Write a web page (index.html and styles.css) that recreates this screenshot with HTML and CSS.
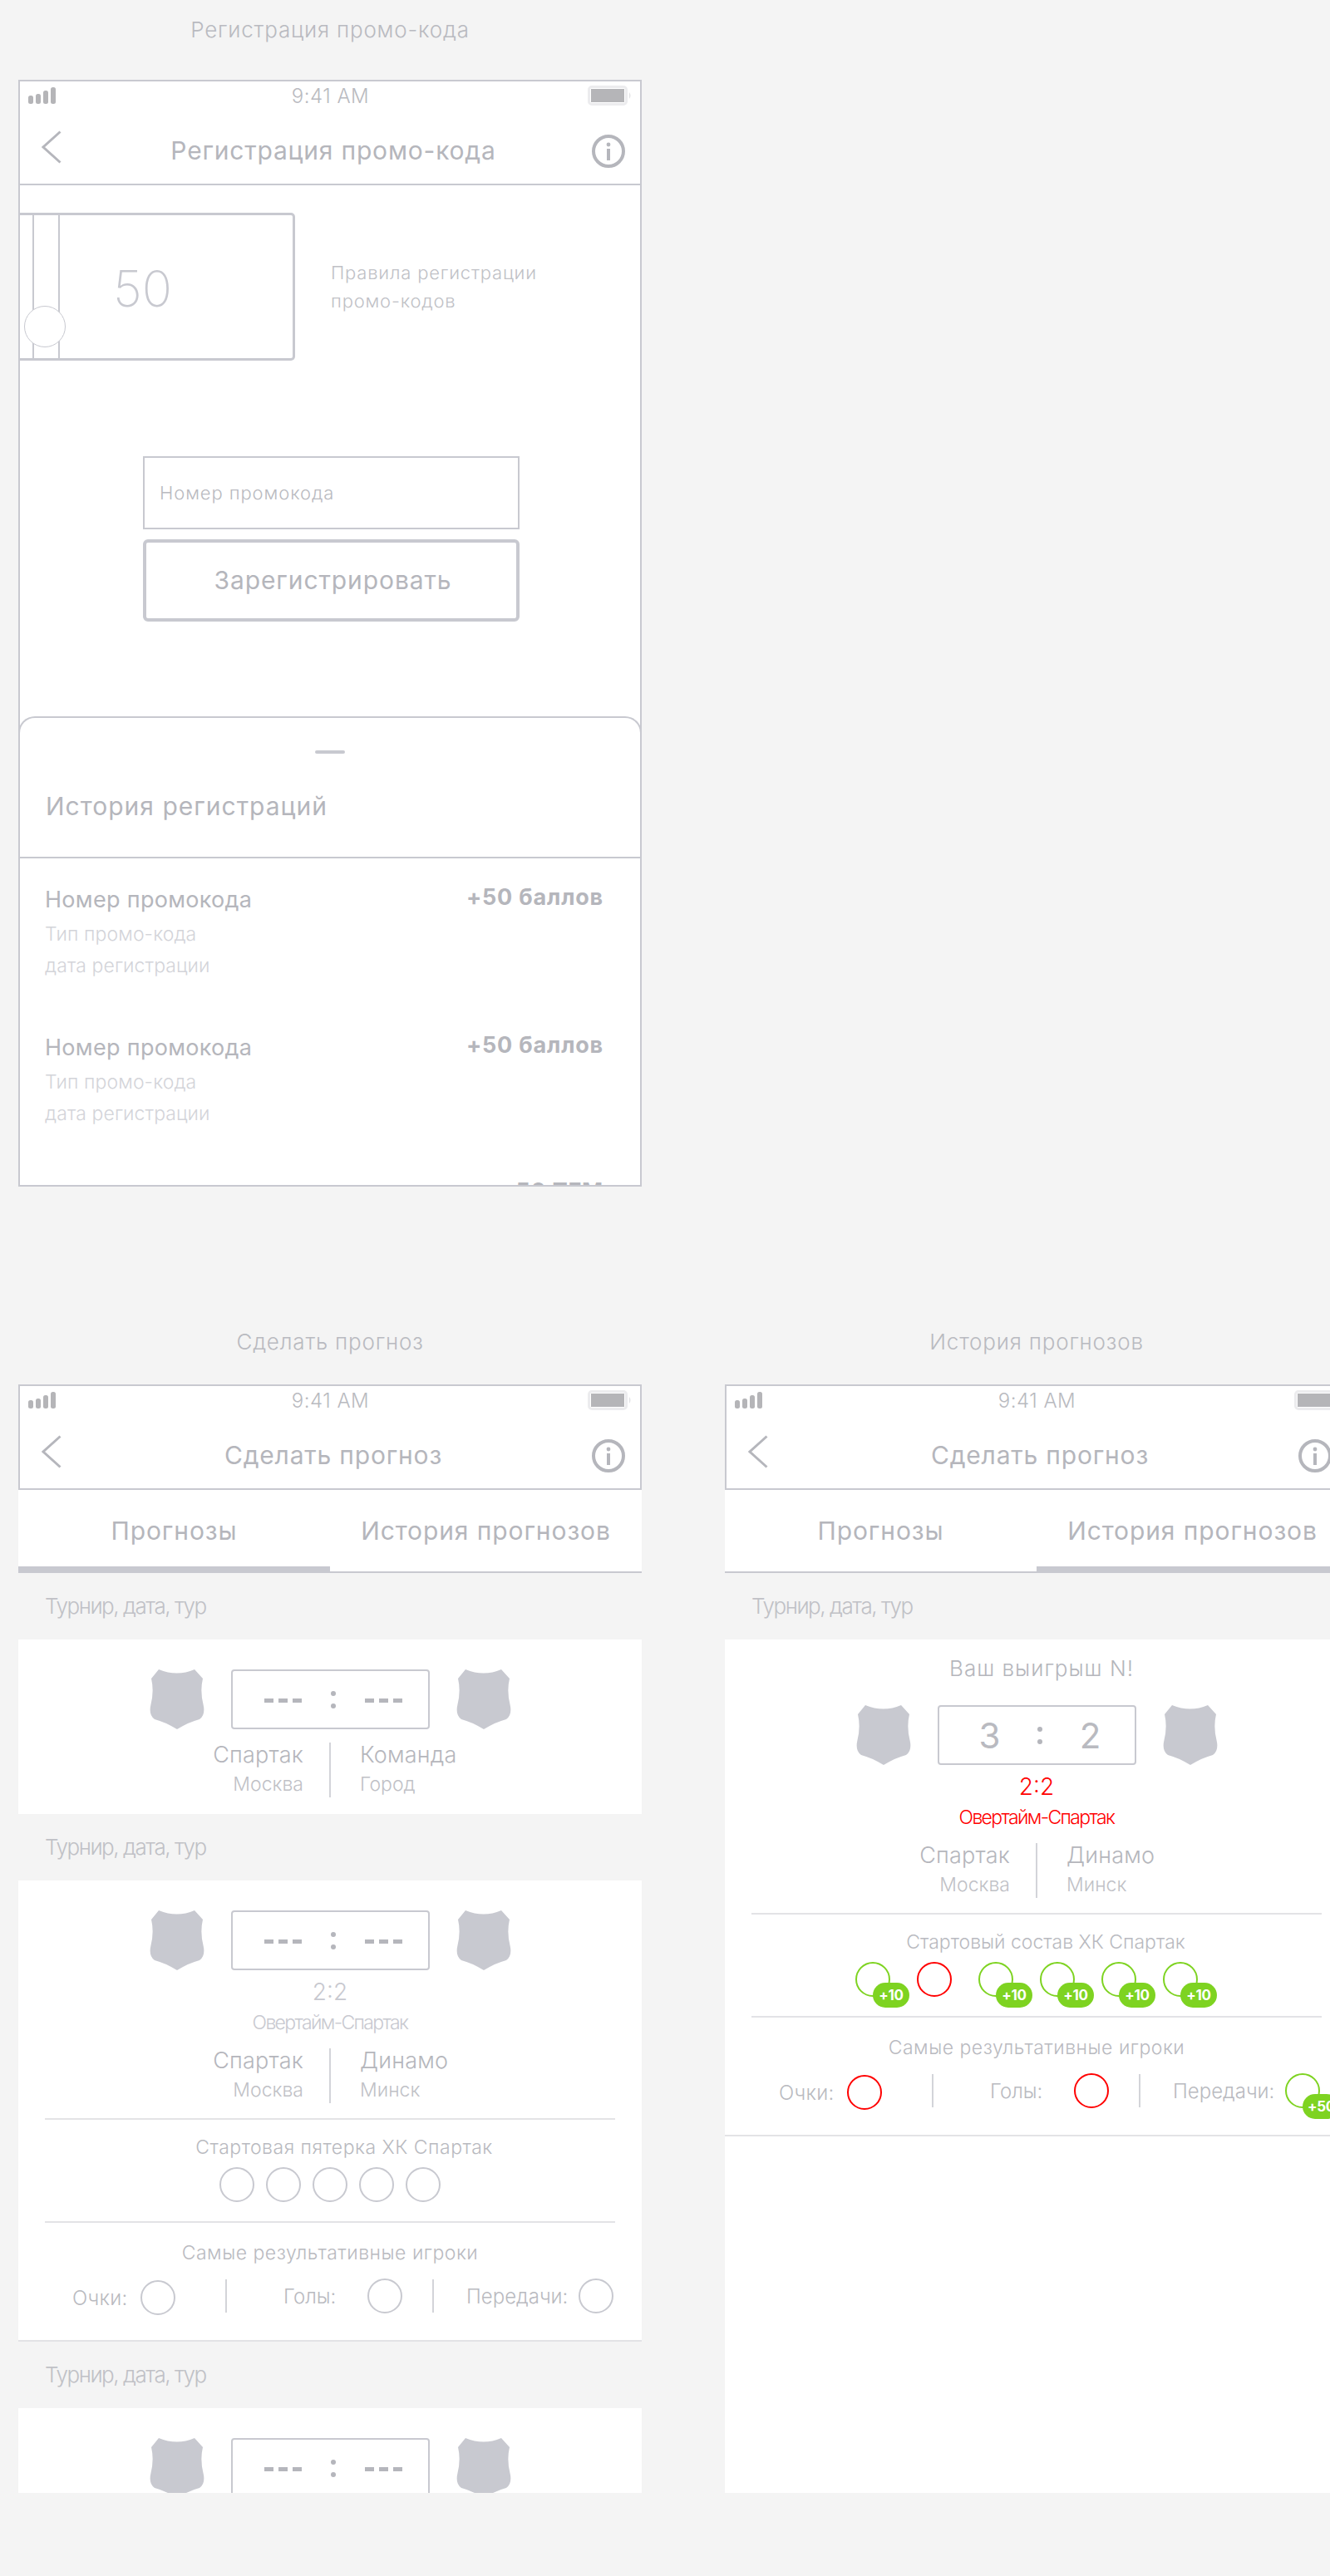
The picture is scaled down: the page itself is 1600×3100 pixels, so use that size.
FILE: index.html
```html
<!DOCTYPE html>
<html lang="ru">
<head>
  <meta charset="UTF-8" />
  <title>Прогнозы и промо-коды</title>
  <link rel="stylesheet" href="styles.css">
</head>
<body>

<!-- Icons used on all screens -->
<svg class="sprite" width="0" height="0">
  <symbol id="i-signal" viewBox="0 0 33 20">
    <rect x="0" y="10" width="6" height="10" rx="2.5" />
    <rect x="9" y="8" width="6" height="12" rx="2.5" />
    <rect x="18" y="4" width="6" height="16" rx="2.5" />
    <rect x="27" y="0" width="6" height="20" rx="2.5" />
  </symbol>
  <symbol id="i-battery" viewBox="0 0 54 24">
    <rect x="1.5" y="1.5" width="45" height="21" rx="3.5" fill="#fff" stroke="#ececee" stroke-width="3" />
    <rect x="4" y="4" width="40" height="16" fill="#b5b5b8" />
    <path d="M50 8 Q53 12 50 16 Z" fill="#e2e2e4" />
  </symbol>
  <symbol id="i-back" viewBox="0 0 24 40">
    <path d="M22.5 1.5 L2 20 L22.5 38.5" fill="none" stroke="#b5b6bc" stroke-width="3" />
  </symbol>
  <symbol id="i-info" viewBox="0 0 40 40">
    <circle cx="20" cy="20" r="18" fill="none" stroke="#b5b6bc" stroke-width="4" />
    <circle cx="20" cy="12" r="2.4" fill="#b5b6bc" />
    <rect x="18" y="17" width="4" height="14" fill="#b5b6bc" />
  </symbol>
  <symbol id="i-shield" viewBox="0 0 66 72">
    <path d="M11 0 Q33 9 54 0 L64 11 Q60.5 26 64.5 42 Q67.5 55 60 60 Q48 63 33 72 Q18 63 6 60 Q-1.5 55 1.5 42 Q5.5 26 2 11 Z" fill="#c8c9d0" />
  </symbol>
</svg>

<div class="board">

  <!-- Регистрация промо-кода -->
  <section class="artboard artboard-wide">
    <div class="board-label board-label-first">Регистрация промо-кода</div>
    <header class="phone-head">
      <div class="status">
        <svg class="ic-signal"><use href="#i-signal" /></svg>
        <span class="status-time">9:41 AM</span>
        <svg class="ic-battery"><use href="#i-battery" /></svg>
      </div>
      <div class="nav">
        <svg class="ic-back"><use href="#i-back" /></svg>
        <span class="nav-title">Регистрация промо-кода</span>
        <svg class="ic-info"><use href="#i-info" /></svg>
      </div>
    </header>
    <div class="promo-screen">
      <div class="promo-top">
        <div class="ticket">
          <i class="ticket-line ticket-line-a"></i>
          <i class="ticket-line ticket-line-b"></i>
          <i class="ticket-knob"></i>
          <span class="ticket-num">50</span>
        </div>
        <div class="rules">Правила регистрации<br>промо-кодов</div>
      </div>
      <form class="promo-form">
        <div class="promo-input">Номер промокода</div>
        <div class="promo-btn">Зарегистрировать</div>
      </form>
      <div class="sheet">
        <div class="sheet-head">
          <div class="sheet-handle"></div>
          <div class="sheet-title">История регистраций</div>
        </div>
        <div class="reg-row">
          <div>
            <div class="reg-name">Номер промокода</div>
            <div class="reg-sub">Тип промо-кода</div>
            <div class="reg-sub">дата регистрации</div>
          </div>
          <div class="reg-points">+50 баллов</div>
        </div>
        <div class="reg-row">
          <div>
            <div class="reg-name">Номер промокода</div>
            <div class="reg-sub">Тип промо-кода</div>
            <div class="reg-sub">дата регистрации</div>
          </div>
          <div class="reg-points">+50 баллов</div>
        </div>
        <div class="reg-row">
          <div></div>
          <div class="reg-points reg-points-cut">50 ТГМ</div>
        </div>
      </div>
    </div>
  </section>

  <!-- Сделать прогноз -->
  <section class="artboard">
    <div class="board-label">Сделать прогноз</div>
    <header class="phone-head">
      <div class="status">
        <svg class="ic-signal"><use href="#i-signal" /></svg>
        <span class="status-time">9:41 AM</span>
        <svg class="ic-battery"><use href="#i-battery" /></svg>
      </div>
      <div class="nav">
        <svg class="ic-back"><use href="#i-back" /></svg>
        <span class="nav-title">Сделать прогноз</span>
        <svg class="ic-info"><use href="#i-info" /></svg>
      </div>
    </header>
    <div class="feed">
      <div class="tabs">
        <div class="tab tab-active">Прогнозы</div>
        <div class="tab">История прогнозов</div>
      </div>

      <div class="day">Турнир, дата, тур</div>
      <div class="match match-short">
        <div class="score-row">
          <svg class="shield"><use href="#i-shield" /></svg>
          <div class="score"><span class="dashes"><i></i><i></i><i></i></span><span class="colon"><i></i><i></i></span><span class="dashes"><i></i><i></i><i></i></span></div>
          <svg class="shield"><use href="#i-shield" /></svg>
        </div>
        <div class="teams">
          <div class="team team-left"><div class="team-name">Спартак</div><div class="team-city">Москва</div></div>
          <i class="teams-sep"></i>
          <div class="team team-right"><div class="team-name">Команда</div><div class="team-city">Город</div></div>
        </div>
      </div>

      <div class="day">Турнир, дата, тур</div>
      <div class="match">
        <div class="score-row">
          <svg class="shield"><use href="#i-shield" /></svg>
          <div class="score"><span class="dashes"><i></i><i></i><i></i></span><span class="colon"><i></i><i></i></span><span class="dashes"><i></i><i></i><i></i></span></div>
          <svg class="shield"><use href="#i-shield" /></svg>
        </div>
        <div class="result">2:2</div>
        <div class="overtime">Овертайм-Спартак</div>
        <div class="teams">
          <div class="team team-left"><div class="team-name">Спартак</div><div class="team-city">Москва</div></div>
          <i class="teams-sep"></i>
          <div class="team team-right"><div class="team-name">Динамо</div><div class="team-city">Минск</div></div>
        </div>
        <hr class="match-hr">
        <div class="block-title block-title-five">Стартовая пятерка ХК Спартак</div>
        <div class="lineup">
          <span class="pick"></span><span class="pick"></span><span class="pick"></span><span class="pick"></span><span class="pick"></span>
        </div>
        <hr class="match-hr match-hr-low">
        <div class="block-title block-title-low">Самые результативные игроки</div>
        <div class="leaders">
          <div class="leader leader-a"><span>Очки:</span><span class="pick"></span></div>
          <i class="leaders-sep"></i>
          <div class="leader leader-b"><span>Голы:</span><span class="pick"></span></div>
          <i class="leaders-sep"></i>
          <div class="leader leader-c"><span>Передачи:</span><span class="pick"></span></div>
        </div>
      </div>

      <div class="day">Турнир, дата, тур</div>
      <div class="match">
        <div class="score-row">
          <svg class="shield"><use href="#i-shield" /></svg>
          <div class="score"><span class="dashes"><i></i><i></i><i></i></span><span class="colon"><i></i><i></i></span><span class="dashes"><i></i><i></i><i></i></span></div>
          <svg class="shield"><use href="#i-shield" /></svg>
        </div>
      </div>
    </div>
  </section>

  <!-- История прогнозов -->
  <section class="artboard">
    <div class="board-label">История прогнозов</div>
    <header class="phone-head">
      <div class="status">
        <svg class="ic-signal"><use href="#i-signal" /></svg>
        <span class="status-time">9:41 AM</span>
        <svg class="ic-battery"><use href="#i-battery" /></svg>
      </div>
      <div class="nav">
        <svg class="ic-back"><use href="#i-back" /></svg>
        <span class="nav-title">Сделать прогноз</span>
        <svg class="ic-info"><use href="#i-info" /></svg>
      </div>
    </header>
    <div class="feed feed-white">
      <div class="tabs">
        <div class="tab">Прогнозы</div>
        <div class="tab tab-active">История прогнозов</div>
      </div>

      <div class="day">Турнир, дата, тур</div>
      <div class="match match-won">
        <div class="win-note">Ваш выигрыш N!</div>
        <div class="score-row">
          <svg class="shield"><use href="#i-shield" /></svg>
          <div class="score score-played"><span>3</span><span class="colon"><i></i><i></i></span><span>2</span></div>
          <svg class="shield"><use href="#i-shield" /></svg>
        </div>
        <div class="result result-red">2:2</div>
        <div class="overtime overtime-red">Овертайм-Спартак</div>
        <div class="teams">
          <div class="team team-left"><div class="team-name">Спартак</div><div class="team-city">Москва</div></div>
          <i class="teams-sep"></i>
          <div class="team team-right"><div class="team-name">Динамо</div><div class="team-city">Минск</div></div>
        </div>
        <hr class="match-hr">
        <div class="block-title block-title-squad">Стартовый состав ХК Спартак</div>
        <div class="lineup lineup-scored">
          <span class="pick pick-ok"><b class="bonus">+10</b></span>
          <span class="pick pick-bad"></span>
          <span class="pick pick-ok"><b class="bonus">+10</b></span>
          <span class="pick pick-ok"><b class="bonus">+10</b></span>
          <span class="pick pick-ok"><b class="bonus">+10</b></span>
          <span class="pick pick-ok"><b class="bonus">+10</b></span>
        </div>
        <hr class="match-hr match-hr-low">
        <div class="block-title block-title-low">Самые результативные игроки</div>
        <div class="leaders">
          <div class="leader leader-a"><span>Очки:</span><span class="pick pick-bad"></span></div>
          <i class="leaders-sep"></i>
          <div class="leader leader-b"><span>Голы:</span><span class="pick pick-bad"></span></div>
          <i class="leaders-sep"></i>
          <div class="leader leader-c"><span>Передачи:</span><span class="pick pick-ok"><b class="bonus">+50</b></span></div>
        </div>
      </div>
    </div>
  </section>

</div>

</body>
</html>
```

FILE: styles.css
```css
/* Reset margin & padding */
* {
  margin: 0;
  padding: 0;
  box-sizing: border-box;
}

body {
  width: 1600px;
  height: 3100px;
  overflow: hidden;
  background: #f4f4f4;
  color: #b5b6bc;
  font-family: Inter, 'Noto Sans', sans-serif;
  font-weight: 300;
}

.sprite {
  display: block;
  height: 0;
}

.ic-signal {
  fill: #b5b5b8;
}

.board {
  display: grid;
  grid-template-columns: 750px 750px;
  column-gap: 100px;
  row-gap: 169px;
  padding: 18px 0 0 22px;
  width: 1622px;
}

.artboard-wide {
  grid-column: 1 / -1;
  width: 750px;
}

.board-label {
  height: 36px;
  line-height: 36px;
  margin-bottom: 33px;
  text-align: center;
  font-size: 26px;
  letter-spacing: 0.8px;
  color: #b9bac0;
}

.board-label-first {
  margin-bottom: 42px;
}

/* Phone header */
.phone-head {
  height: 127px;
  border: 2px solid #c8c9d0;
  background: #fff;
}

.status {
  display: grid;
  grid-template-columns: 1fr auto 1fr;
  align-items: center;
  height: 34px;
  padding: 0 9px 0 10px;
}

.status-time {
  font-size: 24px;
  letter-spacing: 0.5px;
  color: #b9bac0;
}

.ic-signal {
  width: 33px;
  height: 20px;
}

.ic-battery {
  width: 54px;
  height: 24px;
  justify-self: end;
}

.nav {
  display: grid;
  grid-template-columns: 1fr auto 1fr;
  align-items: center;
  height: 89px;
  padding: 8px 18px 0 26px;
}

.nav-title {
  font-size: 30px;
  font-weight: 400;
  letter-spacing: 0.8px;
  color: #b5b6bc;
}

.ic-back {
  width: 24px;
  height: 40px;
  margin-top: -7px;
}

.ic-info {
  width: 40px;
  height: 40px;
  margin-top: 2px;
  justify-self: end;
}

/* Промо-код */
.promo-screen {
  display: flex;
  flex-direction: column;
  height: 1205px;
  overflow: hidden;
  background: #fff;
  border: 2px solid #c8c9d0;
  border-top: none;
}

.promo-top {
  display: flex;
  align-items: center;
  gap: 43px;
  margin-top: 33px;
}

.ticket {
  position: relative;
  display: flex;
  align-items: center;
  width: 331px;
  height: 178px;
  padding: 4px 0 0 112px;
  border: 3px solid #c8c9d0;
  border-left: none;
  border-radius: 0 5px 5px 0;
}

.ticket-num {
  font-size: 60px;
  font-weight: 200;
  color: #c8c9d0;
}

.ticket-line {
  position: absolute;
  top: 0;
  bottom: 0;
  width: 1.5px;
  background: #c8c9d0;
}

.ticket-line-a {
  left: 15px;
}

.ticket-line-b {
  left: 46px;
}

.ticket-knob {
  position: absolute;
  left: 5px;
  top: 109px;
  width: 50px;
  height: 50px;
  border: 1.5px solid #c8c9d0;
  border-radius: 50%;
  background: #fff;
}

.rules {
  font-size: 22px;
  line-height: 34px;
  letter-spacing: 0.8px;
  color: #c0c1c6;
}

.promo-form {
  width: 453px;
  margin: 115px 0 114px 148px;
}

.promo-input {
  height: 88px;
  padding-left: 18px;
  line-height: 84px;
  border: 2px solid #c8c9d0;
  font-size: 22px;
  letter-spacing: 0.9px;
  color: #b9bac0;
}

.promo-btn {
  height: 99px;
  margin-top: 12px;
  padding-left: 4px;
  line-height: 91px;
  text-align: center;
  border: 4px solid #c8c9d0;
  border-radius: 6px;
  font-size: 30px;
  font-weight: 400;
  letter-spacing: 0.9px;
  color: #b5b6bc;
}

.sheet {
  flex: 1;
  margin: 0 -2px;
  background: #fff;
  border: 2px solid #c8c9d0;
  border-bottom: none;
  border-radius: 20px 20px 0 0;
}

.sheet-head {
  height: 169px;
  padding: 39px 31px 0;
  border-bottom: 2px solid #c8c9d0;
}

.sheet-handle {
  width: 36px;
  height: 4px;
  margin: 0 auto;
  border-radius: 2px;
  background: #c8c9d0;
}

.sheet-title {
  margin-top: 41px;
  line-height: 44px;
  font-size: 30px;
  font-weight: 400;
  letter-spacing: 1px;
  color: #b5b6bc;
}

.reg-row {
  display: flex;
  justify-content: space-between;
  height: 178px;
  padding: 32px 44px 0 30px;
}

.reg-name {
  height: 36px;
  line-height: 36px;
  font-size: 27px;
  font-weight: 400;
  letter-spacing: 0.3px;
  color: #b5b6bc;
}

.reg-sub {
  height: 38px;
  line-height: 38px;
  font-size: 23px;
  letter-spacing: 0.1px;
  color: #d3d4d9;
}

.reg-sub:nth-child(2) {
  margin-top: 4px;
}

.reg-points {
  height: 36px;
  margin-top: -3px;
  line-height: 36px;
  font-size: 27px;
  font-weight: 700;
  letter-spacing: 0.8px;
  color: #b5b6bc;
}

.reg-points-cut {
  margin-top: -5px;
}

/* Прогнозы */
.feed {
  height: 1207px;
  overflow: hidden;
}

.feed-white {
  background: linear-gradient(#f4f4f4, #f4f4f4) top / 100% 180px no-repeat, #fff;
}

.tabs {
  display: grid;
  grid-template-columns: 1fr 1fr;
  height: 100px;
  background: #fff;
  border-bottom: 2px solid #c8c9d0;
}

.tab {
  display: flex;
  align-items: center;
  justify-content: center;
  height: 100px;
  padding-bottom: 3px;
  font-size: 30px;
  letter-spacing: 0.9px;
  font-weight: 400;
  color: #b5b6bc;
}

.tab-active {
  box-shadow: inset 0 -8px 0 #c8c9d0;
}

.day {
  height: 80px;
  padding-left: 32px;
  line-height: 80px;
  font-size: 26px;
  letter-spacing: -1.45px;
  color: #c0c1c6;
}

.match {
  padding: 36px 0 0;
  background: #fff;
  border-bottom: 2px solid #e3e3e6;
}

.match-short {
  height: 210px;
  border-bottom: none;
}

.match-won {
  padding-top: 17px;
}

.win-note {
  height: 36px;
  margin-bottom: 26px;
  padding-left: 12px;
  line-height: 36px;
  text-align: center;
  font-size: 26px;
  letter-spacing: 1px;
}

.score-row {
  display: flex;
  justify-content: center;
  gap: 32px;
}

.shield {
  flex: none;
  width: 66px;
  height: 72px;
}

.score {
  display: flex;
  align-items: center;
  justify-content: space-between;
  width: 239px;
  height: 72px;
  padding: 0 31px 0 38px;
  border: 2px solid #c8c9d0;
  border-radius: 4px;
}

.dashes {
  display: flex;
  gap: 6px;
  margin-top: 2px;
}

.dashes i {
  width: 11px;
  height: 5px;
  background: #b5b6bc;
}

.colon {
  display: flex;
  flex-direction: column;
  gap: 9px;
}

.colon i {
  width: 6px;
  height: 6px;
  border-radius: 50%;
  background: #b5b6bc;
}

.score-played {
  padding: 0 40px 0 48px;
  font-size: 42px;
  font-weight: 400;
  color: #b9bac0;
}

.result {
  height: 36px;
  margin-top: 8px;
  line-height: 36px;
  text-align: center;
  font-size: 28px;
  color: #c8c9d0;
}

.overtime {
  height: 36px;
  margin-top: 1px;
  line-height: 36px;
  text-align: center;
  font-size: 23px;
  letter-spacing: -1.65px;
  color: #c8c9d0;
}

.result-red,
.overtime-red {
  color: #f00;
}

.teams {
  display: grid;
  grid-template-columns: 1fr 2px 1fr;
  margin-top: 10px;
}

.match-short .teams {
  margin-top: 13px;
}

.teams-sep {
  align-self: center;
  height: 66px;
  background: #d3d4d9;
}

.team-left {
  padding-right: 31px;
  text-align: right;
}

.team-right {
  padding-left: 35px;
}

.team-name {
  height: 36px;
  line-height: 36px;
  font-size: 27px;
  letter-spacing: 0.2px;
}

.team-city {
  height: 35px;
  line-height: 35px;
  font-size: 23px;
  color: #c0c1c6;
}

.match-hr {
  height: 2px;
  margin: 16px 32px 0;
  border: none;
  background: #e3e3e6;
}

.match-hr-low {
  margin-top: 23px;
}

.block-title {
  height: 36px;
  margin-top: 15px;
  line-height: 36px;
  text-align: center;
  font-size: 23px;
  letter-spacing: 0.5px;
  color: #b9bac0;
}

.block-title-low {
  margin-top: 18px;
}

.block-title-five {
  padding-left: 34px;
}

.block-title-squad {
  padding-left: 22px;
  letter-spacing: 0;
}

.lineup {
  display: flex;
  justify-content: center;
  gap: 14px;
  margin-top: 6px;
}

.lineup-scored {
  gap: 32px;
  padding-right: 24px;
}

.pick {
  position: relative;
  flex: none;
  width: 42px;
  height: 42px;
  border: 2px solid #c8c9d0;
  border-radius: 50%;
}

.pick-ok {
  border-color: #7ed321;
}

.pick-bad {
  border-color: #f00;
}

.bonus {
  position: absolute;
  left: 19px;
  top: 23px;
  width: 44px;
  height: 30px;
  line-height: 30px;
  text-align: center;
  border-radius: 15px;
  background: #7ed321;
  color: #fff;
  font-size: 17px;
  font-weight: 700;
  letter-spacing: -0.3px;
}

.leaders {
  display: flex;
  margin-top: 13px;
  padding: 0 0 30px 65px;
}

.leader {
  display: flex;
  align-items: center;
  gap: 13px;
  height: 42px;
  font-size: 24px;
  color: #b9bac0;
}

.leader-a {
  width: 184px;
  gap: 15px;
  margin-top: 2px;
  letter-spacing: 0.3px;
}

.leader-b {
  width: 247px;
  gap: 38px;
  padding-left: 68px;
}

.leader-c {
  padding-left: 39px;
}

.leaders-sep {
  flex: none;
  width: 2px;
  height: 40px;
  margin-top: 1px;
  background: #d3d4d9;
}
```
